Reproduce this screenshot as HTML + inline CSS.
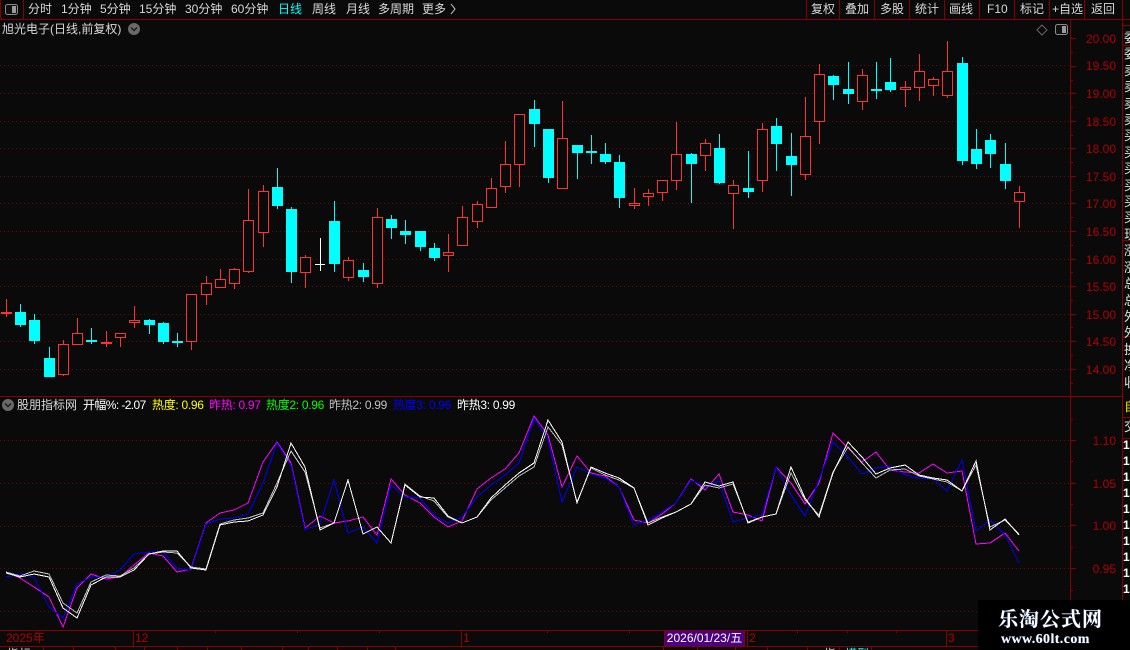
<!DOCTYPE html>
<html lang="zh"><head><meta charset="utf-8"><title>旭光电子</title>
<style>
html,body{margin:0;padding:0;background:#0a0a0a}
#p{position:relative;width:1130px;height:650px;overflow:hidden;background:#0a0a0a;font:12px/14px "Liberation Sans","WenQuanYi Zen Hei","Noto Sans CJK SC",sans-serif;color:#d8d8d8}
#p span,#p div{position:absolute;white-space:nowrap}
svg{position:absolute;left:0;top:0}
.t{top:2px}
.a{right:14px;width:50px;text-align:right;color:#b00000}
.s{top:398px;letter-spacing:-.3px}
</style></head><body><div id="p">
<svg width="1130" height="650" viewBox="0 0 1130 650">
<g stroke="#5e0c0c" stroke-dasharray="1 3" shape-rendering="crispEdges" fill="none">
<path d="M0 65.5H1070M0 93.5H1070M0 121.5H1070M0 148.5H1070M0 176.5H1070M0 203.5H1070M0 231.5H1070M0 259.5H1070M0 286.5H1070M0 314.5H1070M0 341.5H1070M0 369.5H1070M0 440.5H1070M0 483.5H1070M0 526.5H1070M0 568.5H1070M0 611.5H1070"/>
</g>
<g stroke="#850000" fill="none" shape-rendering="crispEdges">
<path d="M0 19.5H1130M0 396.5H1122M0 630.5H1130M0 646.5H1130M23.5 0V19M806.5 0V19M839.5 0V19M874.5 0V19M909.5 0V19M944.5 0V19M979.5 0V19M1014.5 0V19M1049.5 0V19M1084.5 0V19M1122.5 0V650M1070.5 19V630M0.5 0V19"/>
<path d="M1070 38.5h6M1070 66.5h6M1070 93.5h6M1070 121.5h6M1070 148.5h6M1070 176.5h6M1070 203.5h6M1070 231.5h6M1070 259.5h6M1070 286.5h6M1070 314.5h6M1070 341.5h6M1070 369.5h6M1070 52.5h3M1070 80.5h3M1070 107.5h3M1070 135.5h3M1070 162.5h3M1070 190.5h3M1070 217.5h3M1070 245.5h3M1070 272.5h3M1070 300.5h3M1070 327.5h3M1070 355.5h3M1070 383.5h3"/>
<path d="M1070 440.5h6M1070 483.5h6M1070 525.5h6M1070 568.5h6M1070 611.5h6M1070 419.5h3M1070 461.5h3M1070 504.5h3M1070 547.5h3M1070 590.5h3"/>
<path d="M133.5 630V646M664.5 630V646M744.5 630V646M747.5 630V646M946.5 630V646M215.5 630v3M297.5 630v3M379.5 630v3M461.5 630v16M547.5 630v3M629.5 630v3M797.5 630v3M847.5 630v3M896.5 630v3"/>
<path d="M43.5 646v4M73.5 646v4M115.5 646v4M144.5 646v4M177.5 646v4M207.5 646v4M241.5 646v4M282.5 646v4M308.5 646v4M337.5 646v4M367.5 646v4M395.5 646v4M663.5 646v4M697.5 646v4M735.5 646v4M767.5 646v4M807.5 646v4M839.5 646v4M871.5 646v4"/>
<path d="M1122 25.5h8M1122 45.5h8M1122 240.5h8M1122 336.5h8M1122 417.5h8M1122 438.5h8"/>
</g>
<!-- red wicks -->
<path shape-rendering="crispEdges" fill="none" stroke="#ff3232" d="M6.5 299V317M63.5 340V376M77.5 318V345M106.5 331V347M120.5 333V347M134.5 306V328M191.5 294V350M206.5 276V305M220.5 269V288M234.5 268V289M248.5 189V273M263.5 185V247M305.5 255V288M348.5 257V281M377.5 208V288M448.5 234V272M462.5 206V246M477.5 201V228M491.5 178V208M505.5 141V193M519.5 114V187M562.5 101V189M634.5 188V209M648.5 189V206M662.5 180V201M676.5 122V190M705.5 139V171M733.5 180V229M762.5 123V192M805.5 97V180M819.5 64V144M862.5 69V110M905.5 81V107M919.5 54V101M933.5 77V96M947.5 41V98M1019.5 186V228"/>
<!-- red bodies -->
<g shape-rendering="crispEdges" fill="#0a0a0a" stroke="#ff3232">
<rect x="1.5" y="312.5" width="10" height="1"/>
<rect x="58.5" y="344.5" width="10" height="30"/>
<rect x="72.5" y="333.5" width="10" height="11"/>
<rect x="101.5" y="342.5" width="10" height="1"/>
<rect x="115.5" y="333.5" width="10" height="4"/>
<rect x="129.5" y="320.5" width="10" height="2"/>
<rect x="186.5" y="294.5" width="10" height="47"/>
<rect x="201.5" y="283.5" width="10" height="11"/>
<rect x="215.5" y="279.5" width="10" height="8"/>
<rect x="229.5" y="269.5" width="10" height="14"/>
<rect x="243.5" y="220.5" width="10" height="51"/>
<rect x="258.5" y="191.5" width="10" height="41"/>
<rect x="300.5" y="257.5" width="10" height="15"/>
<rect x="343.5" y="260.5" width="10" height="17"/>
<rect x="372.5" y="217.5" width="10" height="66"/>
<rect x="443.5" y="252.5" width="10" height="3"/>
<rect x="457.5" y="217.5" width="10" height="28"/>
<rect x="472.5" y="204.5" width="10" height="17"/>
<rect x="486.5" y="188.5" width="10" height="19"/>
<rect x="500.5" y="164.5" width="10" height="22"/>
<rect x="514.5" y="114.5" width="10" height="50"/>
<rect x="557.5" y="138.5" width="10" height="50"/>
<rect x="629.5" y="203.5" width="10" height="2"/>
<rect x="643.5" y="193.5" width="10" height="3"/>
<rect x="657.5" y="180.5" width="10" height="12"/>
<rect x="671.5" y="154.5" width="10" height="26"/>
<rect x="700.5" y="143.5" width="10" height="12"/>
<rect x="728.5" y="185.5" width="10" height="8"/>
<rect x="757.5" y="129.5" width="10" height="51"/>
<rect x="800.5" y="136.5" width="10" height="38"/>
<rect x="814.5" y="74.5" width="10" height="47"/>
<rect x="857.5" y="75.5" width="10" height="26"/>
<rect x="900.5" y="87.5" width="10" height="2"/>
<rect x="914.5" y="71.5" width="10" height="16"/>
<rect x="928.5" y="79.5" width="10" height="6"/>
<rect x="942.5" y="71.5" width="10" height="24"/>
<rect x="1014.5" y="192.5" width="10" height="9"/>
</g>
<!-- cyan wicks -->
<path shape-rendering="crispEdges" fill="none" stroke="#00ffff" d="M20.5 304V327M34.5 314V344M49.5 347V377M91.5 328V344M149.5 319V334M163.5 322V344M177.5 333V347M277.5 168V209M291.5 207V283M334.5 201V272M363.5 263V282M391.5 215V239M405.5 220V244M420.5 231V251M434.5 243V261M534.5 100V147M548.5 129V183M577.5 145V179M591.5 135V164M605.5 143V164M619.5 155V208M691.5 153V203M719.5 134V184M748.5 151V198M776.5 118V171M791.5 133V196M833.5 75V100M848.5 62V104M876.5 62V99M890.5 58V92M962.5 57V165M976.5 129V169M990.5 134V168M1005.5 143V189"/>
<!-- cyan bodies -->
<g shape-rendering="crispEdges" fill="#00ffff">
<rect x="15" y="312" width="11" height="13"/>
<rect x="29" y="320" width="11" height="21"/>
<rect x="44" y="358" width="11" height="19"/>
<rect x="86" y="340" width="11" height="2"/>
<rect x="144" y="320" width="11" height="5"/>
<rect x="158" y="323" width="11" height="19"/>
<rect x="172" y="341" width="11" height="2"/>
<rect x="272" y="187" width="11" height="19"/>
<rect x="286" y="209" width="11" height="63"/>
<rect x="329" y="221" width="11" height="43"/>
<rect x="358" y="270" width="11" height="7"/>
<rect x="386" y="219" width="11" height="9"/>
<rect x="400" y="231" width="11" height="4"/>
<rect x="415" y="231" width="11" height="16"/>
<rect x="429" y="248" width="11" height="10"/>
<rect x="529" y="109" width="11" height="15"/>
<rect x="543" y="129" width="11" height="49"/>
<rect x="572" y="145" width="11" height="8"/>
<rect x="586" y="151" width="11" height="2"/>
<rect x="600" y="154" width="11" height="8"/>
<rect x="614" y="162" width="11" height="36"/>
<rect x="686" y="154" width="11" height="10"/>
<rect x="714" y="148" width="11" height="35"/>
<rect x="743" y="188" width="11" height="4"/>
<rect x="771" y="126" width="11" height="18"/>
<rect x="786" y="156" width="11" height="9"/>
<rect x="828" y="76" width="11" height="9"/>
<rect x="843" y="89" width="11" height="5"/>
<rect x="871" y="89" width="11" height="2"/>
<rect x="885" y="82" width="11" height="8"/>
<rect x="957" y="63" width="11" height="98"/>
<rect x="971" y="149" width="11" height="15"/>
<rect x="985" y="140" width="11" height="14"/>
<rect x="1000" y="164" width="11" height="17"/>
</g>
<path shape-rendering="crispEdges" fill="none" stroke="#ffffff" d="M320.5 238V271M315 264.5H325"/>
<!-- indicator lines -->
<g fill="none" shape-rendering="crispEdges">
<polyline stroke="#ff00ff" points="6,572 20,578 34,587 49,597 63,627 77,588 91,574 106,579 120,577 134,565 149,553 163,556 177,572 191,569 206,523 220,513 234,510 248,503 263,462 277,442 291,463 305,528 320,516 334,523 348,521 363,517 377,535 391,479 405,495 420,503 434,517 448,527 462,521 477,489 491,478 505,469 519,453 534,416 548,435 562,487 577,456 591,473 605,476 619,487 634,520 648,523 662,514 676,503 691,479 705,490 719,474 733,512 748,515 762,521 776,467 791,483 805,504 819,483 833,433 848,448 862,462 876,452 890,470 905,472 919,473 933,464 947,473 962,471 976,544 990,543 1005,533 1019,551"/>
<polyline stroke="#0000ff" points="6,577 20,574 34,577 49,607 63,618 77,584 91,577 106,577 120,570 134,554 149,552 163,552 177,568 191,570 206,524 220,519 234,518 248,514 263,483 277,443 291,465 305,530 320,524 334,480 348,533 363,527 377,543 391,485 405,497 420,498 434,515 448,523 462,517 477,497 491,485 505,475 519,463 534,418 548,440 562,502 577,467 591,474 605,478 619,487 634,525 648,520 662,512 676,503 691,480 705,487 719,481 733,522 748,518 762,515 776,467 791,495 805,516 819,480 833,442 848,457 862,474 876,468 890,466 905,475 919,478 933,479 947,491 962,460 976,531 990,520 1005,535 1019,563"/>
<polyline stroke="#c0c0c0" points="6,572 20,576 34,571 49,574 63,603 77,613 91,582 106,575 120,576 134,568 149,554 163,552 177,553 191,567 206,569 220,524 234,520 248,518 263,513 277,483 291,451 305,472 320,528 334,523 348,480 363,534 377,527 391,543 405,484 420,496 434,501 448,517 462,523 477,517 491,500 505,488 519,476 534,467 548,427 562,445 577,502 591,468 605,475 619,480 634,488 648,523 662,517 676,512 691,504 705,485 719,488 733,484 748,522 762,517 776,514 791,473 805,500 819,515 833,472 848,447 862,463 876,478 890,470 905,469 919,476 933,479 947,482 962,491 976,465 990,527 1005,520 1019,534"/>
<polyline stroke="#ffffff" points="6,573 20,577 34,574 49,577 63,608 77,618 91,585 106,577 120,577 134,570 149,554 163,551 177,551 191,568 206,570 220,525 234,522 248,521 263,515 277,487 291,443 305,467 320,530 334,523 348,480 363,534 377,527 391,543 405,485 420,497 434,498 448,516 462,523 477,517 491,498 505,485 519,473 534,463 548,420 562,442 577,503 591,467 605,473 619,478 634,488 648,525 662,518 676,512 691,504 705,482 719,486 733,482 748,523 762,517 776,514 791,467 805,498 819,517 833,473 848,442 862,457 876,474 890,468 905,465 919,475 933,478 947,480 962,491 976,461 990,530 1005,519 1019,535"/>
</g>
<!-- icons -->
<rect x="5.5" y="4.5" width="12" height="10" rx="2" fill="#111" stroke="#8a8a8a"/><rect x="12" y="6" width="4" height="7" fill="#9a9a9a"/>
<rect x="1055.5" y="24.5" width="12" height="10" rx="2" fill="#111" stroke="#8a8a8a"/><rect x="1062" y="26" width="4" height="7" fill="#9a9a9a"/>
<path d="M1042 25l5 5-5 5-5-5z" fill="none" stroke="#666"/>
<circle cx="134" cy="29" r="6" fill="#696969"/><path d="M131 27.5l3 3 3-3" fill="none" stroke="#1a1a1a" stroke-width="1.4"/>
<circle cx="8" cy="405" r="6" fill="#696969"/><path d="M5 403.5l3 3 3-3" fill="none" stroke="#1a1a1a" stroke-width="1.4"/>
<path d="M451 4l4 5-4 5" fill="none" stroke="#d0d0d0"/>
</svg>

<span class="t" style="left:28px">分时</span>
<span class="t" style="left:61px">1分钟</span>
<span class="t" style="left:100px">5分钟</span>
<span class="t" style="left:139px">15分钟</span>
<span class="t" style="left:185px">30分钟</span>
<span class="t" style="left:231px">60分钟</span>
<span class="t" style="left:278px;color:#00ffff">日线</span>
<span class="t" style="left:312px">周线</span>
<span class="t" style="left:346px">月线</span>
<span class="t" style="left:378px">多周期</span>
<span class="t" style="left:422px">更多</span>
<span class="t" style="left:811px">复权</span>
<span class="t" style="left:845px">叠加</span>
<span class="t" style="left:880px">多股</span>
<span class="t" style="left:915px">统计</span>
<span class="t" style="left:949px">画线</span>
<span class="t" style="left:987px">F10</span>
<span class="t" style="left:1020px">标记</span>
<span class="t" style="left:1052px">+自选</span>
<span class="t" style="left:1091px">返回</span>

<span style="left:2px;top:22px">旭光电子(日线,前复权)</span>

<span class="a" style="top:32px">20.00</span><span class="a" style="top:59px">19.50</span><span class="a" style="top:87px">19.00</span><span class="a" style="top:115px">18.50</span><span class="a" style="top:142px">18.00</span><span class="a" style="top:170px">17.50</span><span class="a" style="top:197px">17.00</span><span class="a" style="top:225px">16.50</span><span class="a" style="top:253px">16.00</span><span class="a" style="top:280px">15.50</span><span class="a" style="top:308px">15.00</span><span class="a" style="top:335px">14.50</span><span class="a" style="top:363px">14.00</span>
<span class="a" style="top:434px">1.10</span><span class="a" style="top:477px">1.05</span><span class="a" style="top:519px">1.00</span><span class="a" style="top:562px">0.95</span>

<span style="left:17px;top:398px">股朋指标网</span>
<span class="s" style="left:83px;color:#fff;letter-spacing:-.6px">开幅%: -2.07</span>
<span class="s" style="left:152px;color:#ffff00">热度: 0.96</span>
<span class="s" style="left:209px;color:#ff00ff">昨热: 0.97</span>
<span class="s" style="left:266px;color:#00ff00">热度2: 0.96</span>
<span class="s" style="left:329px;color:#c0c0c0">昨热2: 0.99</span>
<span class="s" style="left:393px;color:#0000ff">热度3: 0.96</span>
<span class="s" style="left:457px;color:#fff">昨热3: 0.99</span>

<div style="left:1124px;top:30px;width:6px;height:360px;overflow:hidden;line-height:16.4px;font-size:13px;white-space:normal;color:#e0e0e0">委<br>委<br>卖<br>卖<br>卖<br>卖<br>买<br>买<br>买<br>买<br>买<br>买<br>现<br>涨<br>涨<br>总<br>总<br>外<br>外<br>换<br>净<br>收</div>
<div style="left:1124px;top:400px;width:6px;height:16px;overflow:hidden;color:#e0e000;font-size:13px">自</div>
<div style="left:1124px;top:420px;width:6px;height:16px;overflow:hidden;color:#e0e0e0;font-size:13px">交</div>
<div style="left:1123px;top:437px;width:7px;height:162px;overflow:hidden;white-space:normal;line-height:16px;font-weight:bold;color:#fff">1<br>1<br>1<br>1<br>1<br>1<br>1<br>1<br>1<br>1</div>

<span style="left:6px;top:631px;color:#b00000">2025年</span>
<span style="left:135px;top:631px;color:#b00000">12</span>
<span style="left:463px;top:631px;color:#b00000">1</span>
<span style="left:749px;top:631px;color:#b00000">2</span>
<span style="left:948px;top:631px;color:#b00000">3</span>
<span style="left:665px;top:631px;width:79px;height:15px;background:#4b0082;color:#fff;text-align:center">2026/01/23/五</span>

<span style="left:7px;top:647px">指标</span>
<span style="left:824px;top:647px">指</span>
<span style="left:845px;top:647px;color:#00ffff">模型</span>

<div style="left:978px;top:600px;width:152px;height:50px;background:#000"></div>
<span style="left:998px;top:606px;font:bold 20px/24px 'Noto Serif CJK SC',serif;letter-spacing:1px;color:#fff;text-shadow:0 0 1px #5f7fd0">乐淘公式网</span>
<span style="left:1001px;top:632px;font:bold 14px/16px 'Liberation Serif',serif;letter-spacing:.4px;color:#fff;text-shadow:0 0 1px #5f7fd0">www.60lt.com</span>
</div></body></html>
